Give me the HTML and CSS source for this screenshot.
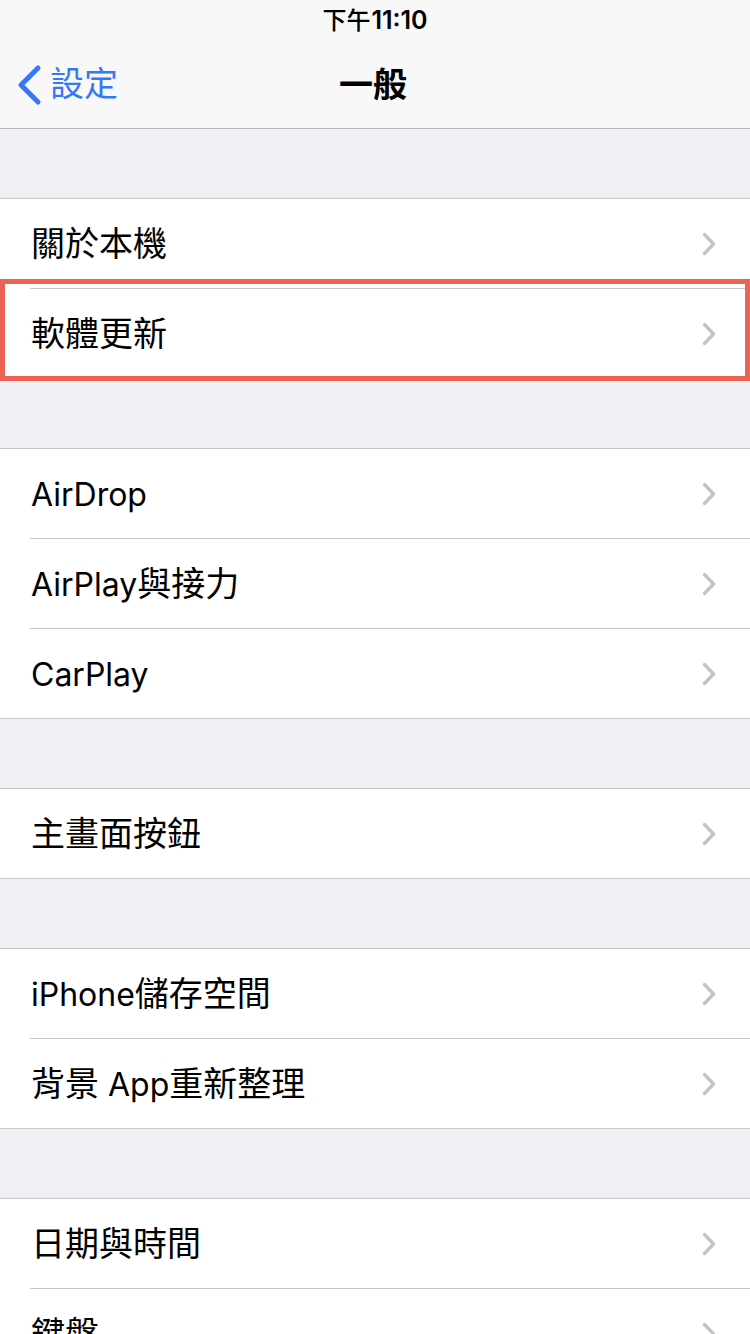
FILE: index.html
```html
<!DOCTYPE html>
<html lang="zh-Hant">
<head>
<meta charset="utf-8">
<title>一般</title>
<link rel="stylesheet" href="styles.css">
</head>
<body>
<div class="screen">
  <header class="top">
    <div class="status">下午<span class="lat-s">11:10</span></div>
    <nav class="nav">
      <a class="back">
        <svg class="back-icon" width="26" height="42" viewBox="0 0 26 42"><path d="M22 4 L5 21 L22 38" fill="none" stroke="#3478F6" stroke-width="5" stroke-linecap="round" stroke-linejoin="round"/></svg>
        <span class="back-text">設定</span>
      </a>
      <h1 class="title">一般</h1>
    </nav>
  </header>

  <div class="gap"></div>
  <ul class="group">
    <li class="row"><span class="label">關於本機</span><svg class="chev" width="14" height="24" viewBox="0 0 14 24"><path d="M2.5 2.5 L11.5 12 L2.5 21.5" fill="none" stroke="#C4C4C7" stroke-width="3.4" stroke-linecap="round" stroke-linejoin="round"/></svg></li>
    <li class="row highlight"><span class="label">軟體更新</span><svg class="chev" width="14" height="24" viewBox="0 0 14 24"><path d="M2.5 2.5 L11.5 12 L2.5 21.5" fill="none" stroke="#C4C4C7" stroke-width="3.4" stroke-linecap="round" stroke-linejoin="round"/></svg></li>
  </ul>

  <div class="gap"></div>
  <ul class="group">
    <li class="row"><span class="label"><span class="lat">AirDrop</span></span><svg class="chev" width="14" height="24" viewBox="0 0 14 24"><path d="M2.5 2.5 L11.5 12 L2.5 21.5" fill="none" stroke="#C4C4C7" stroke-width="3.4" stroke-linecap="round" stroke-linejoin="round"/></svg></li>
    <li class="row"><span class="label"><span class="lat">AirPlay</span>與接力</span><svg class="chev" width="14" height="24" viewBox="0 0 14 24"><path d="M2.5 2.5 L11.5 12 L2.5 21.5" fill="none" stroke="#C4C4C7" stroke-width="3.4" stroke-linecap="round" stroke-linejoin="round"/></svg></li>
    <li class="row"><span class="label"><span class="lat">CarPlay</span></span><svg class="chev" width="14" height="24" viewBox="0 0 14 24"><path d="M2.5 2.5 L11.5 12 L2.5 21.5" fill="none" stroke="#C4C4C7" stroke-width="3.4" stroke-linecap="round" stroke-linejoin="round"/></svg></li>
  </ul>

  <div class="gap"></div>
  <ul class="group">
    <li class="row"><span class="label">主畫面按鈕</span><svg class="chev" width="14" height="24" viewBox="0 0 14 24"><path d="M2.5 2.5 L11.5 12 L2.5 21.5" fill="none" stroke="#C4C4C7" stroke-width="3.4" stroke-linecap="round" stroke-linejoin="round"/></svg></li>
  </ul>

  <div class="gap"></div>
  <ul class="group">
    <li class="row"><span class="label"><span class="lat">iPhone</span>儲存空間</span><svg class="chev" width="14" height="24" viewBox="0 0 14 24"><path d="M2.5 2.5 L11.5 12 L2.5 21.5" fill="none" stroke="#C4C4C7" stroke-width="3.4" stroke-linecap="round" stroke-linejoin="round"/></svg></li>
    <li class="row"><span class="label">背景<span class="lat"> App</span>重新整理</span><svg class="chev" width="14" height="24" viewBox="0 0 14 24"><path d="M2.5 2.5 L11.5 12 L2.5 21.5" fill="none" stroke="#C4C4C7" stroke-width="3.4" stroke-linecap="round" stroke-linejoin="round"/></svg></li>
  </ul>

  <div class="gap"></div>
  <ul class="group">
    <li class="row"><span class="label">日期與時間</span><svg class="chev" width="14" height="24" viewBox="0 0 14 24"><path d="M2.5 2.5 L11.5 12 L2.5 21.5" fill="none" stroke="#C4C4C7" stroke-width="3.4" stroke-linecap="round" stroke-linejoin="round"/></svg></li>
    <li class="row"><span class="label">鍵盤</span><svg class="chev" width="14" height="24" viewBox="0 0 14 24"><path d="M2.5 2.5 L11.5 12 L2.5 21.5" fill="none" stroke="#C4C4C7" stroke-width="3.4" stroke-linecap="round" stroke-linejoin="round"/></svg></li>
  </ul>
</div>
</body>
</html>
```

FILE: styles.css
```css
* { box-sizing: border-box; }

html, body {
  margin: 0;
  padding: 0;
}

body {
  background: #EFEFF4;
  font-family: Inter, "Noto Sans CJK TC", sans-serif;
  color: #000;
}

.screen {
  width: 750px;
  height: 1334px;
  overflow: hidden;
  background: #EFEFF4;
}

.top {
  background: #F8F8F8;
  border-bottom: 1px solid #B4B4B6;
}

.status {
  height: 40px;
  display: flex;
  align-items: center;
  justify-content: center;
  font-size: 24px;
  font-weight: 500;
  line-height: 1;
  padding-top: 1px;
}

.lat-s {
  font-weight: 600;
  font-size: 25px;
  margin-left: 1px;
}

.nav {
  height: 88px;
  position: relative;
  display: flex;
  align-items: center;
  justify-content: center;
}

.back {
  position: absolute;
  left: 16px;
  top: 0;
  bottom: 0;
  display: flex;
  align-items: center;
  gap: 8px;
  color: #3478F6;
}

.back-icon {
  display: block;
  margin-top: 2px;
}

.back-text {
  font-size: 34px;
  line-height: 1;
}

.title {
  margin: 0;
  font-size: 34px;
  font-weight: 600;
  line-height: 1;
  margin-top: 2px;
  margin-left: -4px;
}

.gap {
  height: 69px;
}

.group {
  list-style: none;
  margin: 0;
  padding: 0;
  background: #fff;
  border-top: 1px solid #C8C7CC;
  border-bottom: 1px solid #C8C7CC;
}

.row {
  position: relative;
  height: 90px;
  padding: 0 34px 0 31px;
  display: flex;
  align-items: center;
  justify-content: space-between;
}

.row + .row::before {
  content: "";
  position: absolute;
  left: 30px;
  right: 0;
  top: 0;
  height: 1px;
  background: #C8C7CC;
}

.row:first-child {
  height: 89px;
}

.row + .row {
  padding-top: 1px;
}

.label {
  font-size: 34px;
  line-height: 1;
}

.lat {
  font-size: 32px;
}

.chev {
  display: block;
}

.highlight::after {
  content: "";
  position: absolute;
  left: 0;
  right: 0;
  top: -9px;
  bottom: -3px;
  border: 5px solid #EC6356;
  pointer-events: none;
}
```
